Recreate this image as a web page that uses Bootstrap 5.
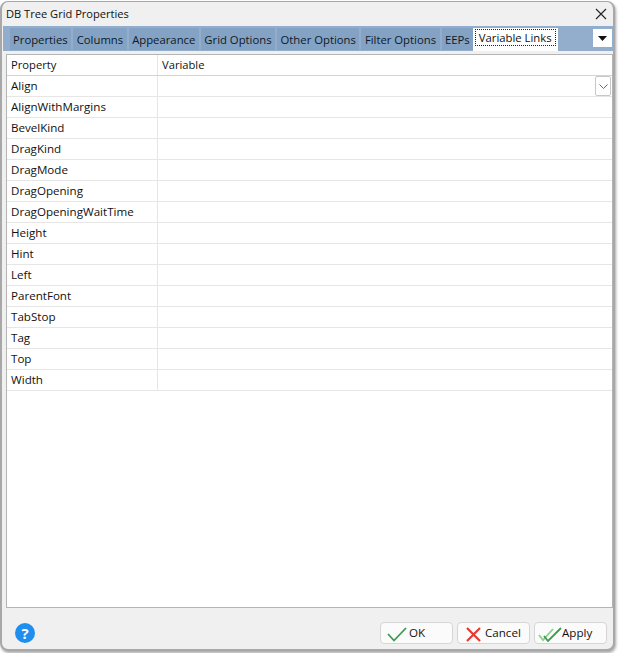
<!DOCTYPE html>
<html lang="en">
<head>
  <meta charset="UTF-8" />
  <meta name="viewport" content="width=device-width, initial-scale=1.0"/>
  <title>DB Tree Grid Properties</title>
  <link href="https://cdn.jsdelivr.net/npm/bootstrap@5.3.3/dist/css/bootstrap.min.css" rel="stylesheet">
  <style>
    html, body { height: 100%; }
    body { background: #fff; font-family: "Open Sans", "Noto Sans", sans-serif; font-size: 11.6px; color: #111; }
    .dlg-window { width: 615px; height: 650px; margin: 1px 0 0 0; background: #f0f0f0; border: 1px solid #a8a8a8; border-width: 1px 2px 2px 2px; border-radius: 8px; box-shadow: 1px 2px 3px rgba(0,0,0,.35); overflow: hidden; }
    .dlg-title { height: 24px; padding: 0 6px 0 4px; font-size: 11.1px; flex: none; }
    .dlg-tabs { height: 25px; flex: none; background: #93aecd; padding: 2px 1px 1px 6.5px; margin: 0 0 0 1px; font-size: 11.3px; }
    .dlg-tab { height: 22px; line-height: 23px; padding: 0 3.5px; margin-right: 2px; background: #84a2c4; color: #0d1a26; white-space: nowrap; }
    .dlg-tab.is-on { background: #fff; color: #111; margin-right: 0; margin-left: -2px; padding: 0 2px 0 1.5px; line-height: 20px; height: 23px; }
    .dlg-tab.is-on span { display: inline-block; line-height: 15px; padding: 0 3px; border: 1px dotted #222; }
    .dlg-more { width: 19px; height: 18px; background: #fff; margin-top: 1px; }
    .dlg-grid { height: 554px; flex: none; margin: 3px 0 0 4px; background: #fff; border: 1px solid #b4b4b4; overflow: hidden; }
    .dlg-row { height: 21px; line-height: 20px; border-bottom: 1px solid #e6e6e6; position: relative; }
    .dlg-row.is-head { border-bottom-color: #d4d4d4; font-size: 11.2px; }
    .dlg-name { width: 151px; padding-left: 4px; border-right: 1px solid #e6e6e6; flex: none; }
    .dlg-val { padding-left: 4px; flex: 1; }
    .dlg-combo { position: absolute; right: 1px; top: 0; width: 16px; height: 20px; background: #fff; border: 1px solid #c8c8c8; border-radius: 2px; }
    .dlg-foot { height: 41px; flex: none; padding: 14px 6px 0 13px; }
    .dlg-help { width: 20px; height: 20px; margin-top: 1px; border-radius: 50%; background: #1e8fee; color: #fff; font-weight: 700; font-size: 15px; line-height: 20px; text-align: center; }
    .dlg-btn { height: 22px; width: 73px; padding: 0; background: #fbfbfb; border: 1px solid #d6d6d6; border-radius: 4px; color: #111; font-size: 11.6px; line-height: 20px; }
    .dlg-btn svg { margin-top: 2px; flex: none; }
    .dlg-btn.is-ok { padding-left: 6px; }
    .dlg-btn.is-ok svg { margin-right: 2px; }
    .dlg-btn.is-cancel { padding-left: 8px; }
    .dlg-btn.is-cancel svg { margin-right: 4px; }
    .dlg-btn.is-apply { padding-left: 3px; }
  </style>
</head>
<body>
  <div class="dlg-window d-flex flex-column">
    <div class="dlg-title d-flex align-items-center justify-content-between">
      <span>DB Tree Grid Properties</span>
      <svg width="12" height="12" viewBox="0 0 12 12"><path d="M1 1 L11 11 M11 1 L1 11" stroke="#222" stroke-width="1.1" fill="none"/></svg>
    </div>

    <div class="dlg-tabs d-flex align-items-start">
      <div class="dlg-tab">Properties</div>
      <div class="dlg-tab">Columns</div>
      <div class="dlg-tab">Appearance</div>
      <div class="dlg-tab">Grid Options</div>
      <div class="dlg-tab">Other Options</div>
      <div class="dlg-tab">Filter Options</div>
      <div class="dlg-tab">EEPs</div>
      <div class="dlg-tab is-on"><span>Variable Links</span></div>
      <div class="dlg-more ms-auto d-flex align-items-center justify-content-center">
        <svg width="9" height="5" viewBox="0 0 9 5"><path d="M0 0 H9 L4.5 5 Z" fill="#111"/></svg>
      </div>
    </div>

    <div class="dlg-grid" id="grid">
      <div class="dlg-row is-head d-flex"><div class="dlg-name">Property</div><div class="dlg-val">Variable</div></div>
    </div>

    <div class="dlg-foot d-flex align-items-start">
      <div class="dlg-help">?</div>
      <div class="ms-auto d-flex gap-1">
        <button class="dlg-btn is-ok d-flex align-items-center" type="button">
          <svg width="20" height="15" viewBox="0 0 20 15"><path d="M1 7 L7 13.5 L19 1" stroke="#3f9a52" stroke-width="1.8" fill="none"/></svg>OK
        </button>
        <button class="dlg-btn is-cancel d-flex align-items-center" type="button">
          <svg width="15" height="15" viewBox="0 0 15 15"><path d="M1 1 L14 14 M14 1 L1 14" stroke="#e8392f" stroke-width="2.2" fill="none"/></svg>Cancel
        </button>
        <button class="dlg-btn is-apply d-flex align-items-center" type="button">
          <svg width="24" height="15" viewBox="0 0 24 15"><path d="M1 8 L5 13 L15 2" stroke="#8fce8f" stroke-width="1.8" fill="none"/><path d="M6 9 L10 14 L23 1" stroke="#3f9a52" stroke-width="1.8" fill="none"/></svg>Apply
        </button>
      </div>
    </div>
  </div>

  <script>
    const props = ["Align", "AlignWithMargins", "BevelKind", "DragKind", "DragMode", "DragOpening", "DragOpeningWaitTime",
      "Height", "Hint", "Left", "ParentFont", "TabStop", "Tag", "Top", "Width"];
    const grid = document.getElementById("grid");
    props.forEach((name, i) => {
      const row = document.createElement("div");
      row.className = "dlg-row d-flex";
      row.innerHTML = `<div class="dlg-name">${name}</div><div class="dlg-val"></div>`;
      if (i === 0) {
        row.innerHTML += `<div class="dlg-combo d-flex align-items-center justify-content-center"><svg width="9" height="5" viewBox="0 0 9 5"><path d="M0.5 0.5 L4.5 4.5 L8.5 0.5" stroke="#666" fill="none"/></svg></div>`;
      }
      grid.appendChild(row);
    });
  </script>
</body>
</html>
